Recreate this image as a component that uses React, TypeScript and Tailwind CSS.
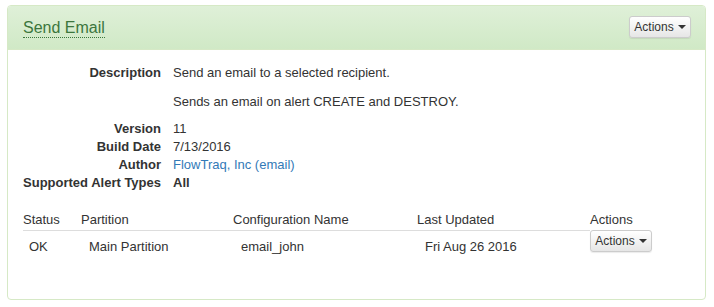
import React from "react";

function Caret() {
  return <span className="inline-block ml-[4px] align-middle w-0 h-0 border-l-[4px] border-r-[4px] border-t-[4px] border-l-transparent border-r-transparent border-t-[#333]" />;
}

function ActionsBtn() {
  return (
    <button className="h-[22px] w-[62px] justify-center rounded-[3px] border border-[#ccc] bg-gradient-to-b from-white to-[#e6e6e6] text-[12px] text-[#333] leading-none shadow-[0_1px_1px_rgba(0,0,0,0.08)] flex items-center">
      Actions<Caret />
    </button>
  );
}

export default function App() {
  return (
    <div className="w-[714px] h-[307px] bg-white pt-[5px] pl-[7px] pr-[8px]" style={{ fontFamily: '"Liberation Sans", Arial, sans-serif' }}>
      <div className="w-[699px] h-[295px] border border-[#d6e9c6] rounded-[4px] overflow-hidden">
        <div className="h-[44px] bg-gradient-to-b from-[#dff0d8] to-[#d0e9c6] border-b border-[#d6e9c6] flex items-center justify-between pl-[15px] pr-[14px]">
          <span className="text-[16px] text-[#3c763d] border-b border-dotted border-[#3c763d] leading-[18px] mt-[1px]">Send Email</span>
          <div className="-mt-[1px]"><ActionsBtn /></div>
        </div>
        <div className="pl-[15px] pt-[14px] text-[13px] text-[#333] leading-[18px]">
          <div className="grid grid-cols-[138px_1fr] gap-x-[12px]">
            <div className="font-bold text-right">Description</div>
            <div>
              <div>Send an email to a selected recipient.</div>
              <div className="mt-[11px]">Sends an email on alert CREATE and DESTROY.</div>
            </div>
            <div className="font-bold text-right mt-[9px]">Version</div>
            <div className="mt-[9px]">11</div>
            <div className="font-bold text-right">Build Date</div>
            <div>7/13/2016</div>
            <div className="font-bold text-right">Author</div>
            <div className="text-[#337ab7]">FlowTraq, Inc (email)</div>
            <div className="font-bold text-right">Supported Alert Types</div>
            <div className="font-bold">All</div>
          </div>
          <div className="mt-[19px] flex">
            <div className="grid grid-cols-[58px_152px_184px_173px] h-[20px] border-b border-[#ddd] w-[567px]">
              <div>Status</div>
              <div>Partition</div>
              <div>Configuration Name</div>
              <div>Last Updated</div>
            </div>
            <div>Actions</div>
          </div>
          <div className="flex h-[28px] items-start">
            <div className="grid grid-cols-[58px_152px_184px_173px] pt-[7px]">
              <div className="pl-[6px]">OK</div>
              <div className="pl-[8px]">Main Partition</div>
              <div className="pl-[8px]">email_john</div>
              <div className="pl-[8px]">Fri Aug 26 2016</div>
            </div>
            <div className="-mt-[1px]">
              <ActionsBtn />
            </div>
          </div>
        </div>
      </div>
    </div>
  );
}
